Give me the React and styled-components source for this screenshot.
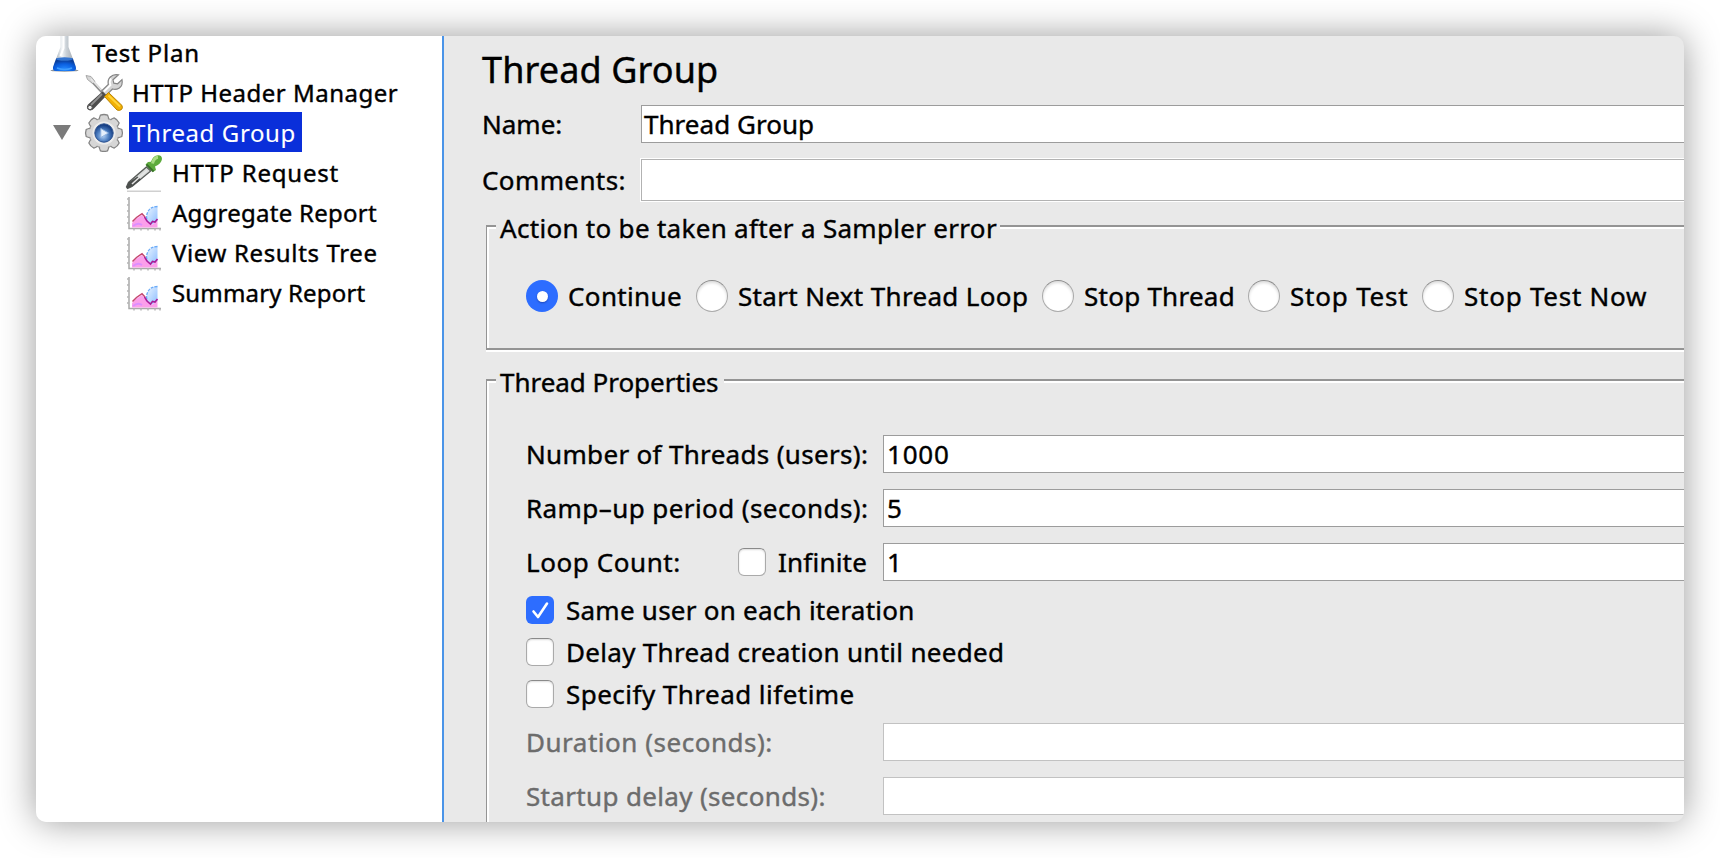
import React from 'react';
import styled, { createGlobalStyle, css } from 'styled-components';

const GlobalStyle = createGlobalStyle`
  * { box-sizing: border-box; }
  body {
    margin: 0;
    background: #fff;
    color: #000;
    font-family: 'Noto Sans', 'Open Sans', sans-serif;
    font-size: 26px;
    overflow: hidden;
  }
`;

const Stage = styled.div`
  height: 858px;
  padding: 36px;
`;

const Window = styled.div`
  display: flex;
  width: 1648px;
  height: 786px;
  border-radius: 10px;
  overflow: hidden;
  background: #e9e9e9;
  box-shadow: 0 0 36px rgba(0, 0, 0, 0.4);
`;

const Text = styled.span`
  white-space: pre;
  letter-spacing: ${(p) => p.$track || 0}px;
  -webkit-text-stroke: 0.4px currentColor;
`;

/* ---------- tree ---------- */

const Sidebar = styled.nav`
  flex: none;
  width: 408px;
  border-right: 2px solid #4a94e8;
  background: #fff;
  overflow: hidden;
`;

const Tree = styled.div`
  margin-top: -4px;
`;

const TreeRow = styled.div`
  display: flex;
  align-items: center;
  height: 40px;
  padding-left: ${(p) => 9 + p.$level * 40}px;
  font-size: 24px;
`;

const Twisty = styled.span`
  width: 0;
  height: 0;
  margin: 0 14px 0 -32px;
  border: 9px solid transparent;
  border-top: 15px solid #7b7b7b;
  border-bottom: 0;
`;

const TreeIcon = styled.svg`
  flex: none;
  width: 40px;
  height: 40px;
  margin: 0 1px 0 -1px;
`;

const TreeLabel = styled(Text)`
  margin-left: 4px;
  padding: 1px 6px 0 3px;
  height: 40px;
  line-height: 40px;
  ${(p) =>
    p.$selected &&
    css`
      background: #0a2fda;
      color: #fff;
      -webkit-text-stroke-width: 0.1px;
    `}
`;

const FlaskIcon = () => (
  <TreeIcon viewBox="0 0 40 40">
    <defs>
      <linearGradient id="glass">
        <stop offset="0" stopColor="#aab4bd" />
        <stop offset=".35" stopColor="#f3f6f8" />
        <stop offset=".62" stopColor="#c9d0d6" />
        <stop offset="1" stopColor="#a8b0b8" />
      </linearGradient>
      <radialGradient id="liquid" cx=".5" cy=".85" r=".7">
        <stop offset="0" stopColor="#2389ff" />
        <stop offset=".6" stopColor="#0b5fe0" />
        <stop offset="1" stopColor="#0b3f9c" />
      </radialGradient>
    </defs>
    <ellipse cx="20.500" cy="38.400" rx="14" ry="1.300" fill="#8d949c" />
    <path d="M16.500 3h8v12l4.500 12H12l4.500-12z" fill="url(#glass)" />
    <path d="M19.500 3v13l-3 8" stroke="#fff" strokeWidth="2" fill="none" />
    <path d="M12.100 26.500h16.800l3 8.500q.8 4-3 4H12q-3.600 0-3-4z" fill="url(#liquid)" />
    <ellipse cx="20.500" cy="27" rx="8.300" ry="1.700" fill="#3575d0" />
    <path d="M13 36q7.500 3 15 0" stroke="#3f9dff" strokeWidth="1.500" fill="none" />
  </TreeIcon>
);

const ToolsIcon = () => (
  <TreeIcon viewBox="0 0 40 40">
    <path d="M5 6l15 16" stroke="#8e8e8e" strokeWidth="3" />
    <path d="M2 3.500l5 1 4 5-2.500 2-5-4z" fill="#d6d6d6" stroke="#999" strokeWidth=".8" />
    <path d="M7 7l13 14" stroke="#e8e8e8" strokeWidth="1.200" />
    <path
      d="M34.500 2.800l-5.500 5 .8 3.400 3.800.6 4.400-4.200q1.200 6-3 8.600-3 1.800-6.500.8L22 23.500 17.500 19l6.800-6.500q-1-4.500 2-7.500 3.200-3.300 8.200-2.200z"
      fill="#d4d4d4"
      stroke="#858585"
      strokeWidth="1.200"
    />
    <path d="M27 6.500q-2 3-.5 6.500L20 19.500" stroke="#fff" strokeWidth="1.800" fill="none" />
    <path d="M18.500 19.500l4 4L10.500 36Q8 39.500 4.500 38q-3-2.500-.5-5.500z" fill="#4d4d4d" />
    <path d="M18 22L7 33" stroke="#929292" strokeWidth="1.800" />
    <circle cx="6" cy="35.500" r="2.200" fill="#eee" stroke="#555" />
    <path d="M20.500 24.500l4-4L38 33.500q1 2.500-.5 4-2 1.500-4.500.5z" fill="#f2b105" stroke="#b98200" strokeWidth="1" />
    <path d="M24.500 23.500L36 34.500" stroke="#ffd43c" strokeWidth="1.800" />
  </TreeIcon>
);

const TEETH = [0, 45, 90, 135, 180, 225, 270, 315];

const GearIcon = () => (
  <TreeIcon viewBox="0 0 40 40">
    <defs>
      <radialGradient id="hub" cx=".45" cy=".65" r=".6">
        <stop offset="0" stopColor="#b4d3f6" />
        <stop offset=".55" stopColor="#4779bd" />
        <stop offset="1" stopColor="#123a80" />
      </radialGradient>
    </defs>
    <g fill="#d6d6d6" stroke="#858585" strokeWidth="1.300">
      {TEETH.map((a) => (
        <path key={a} transform={`rotate(${a} 20 21)`} d="M14.800 8l1.600-4.800q3.600-1.400 7.200 0L25.200 8z" />
      ))}
    </g>
    <circle cx="20" cy="21" r="14.800" fill="#d6d6d6" stroke="#8f8f8f" strokeWidth=".9" />
    <g fill="#d6d6d6">
      {TEETH.map((a) => (
        <path key={a} transform={`rotate(${a} 20 21)`} d="M15.500 9l1.500-5h6l1.500 5z" />
      ))}
    </g>
    <circle cx="20" cy="21" r="11.500" fill="#ececec" />
    <circle cx="20" cy="21" r="9.200" fill="url(#hub)" stroke="#2e5390" strokeWidth="1" />
    <path d="M16.800 16.500l7.600 4.500-7.600 4.500z" fill="#e6f0fc" stroke="#8fb2e0" strokeWidth=".9" />
  </TreeIcon>
);

const DropperIcon = () => (
  <TreeIcon viewBox="0 0 40 40">
    <path d="M3 39.200h34" stroke="#d0d0d0" strokeWidth="1.500" />
    <path d="M22.500 15l4.200 4L8 34.500l-4.500 2-1-1.500 2-4.500z" fill="#d9dcda" stroke="#5a5d5b" strokeWidth="1.300" />
    <path d="M13.500 24.500l3.500 3L8 34.500l-4.500 2-1-1.500 2-4.500z" fill="#4b4e4c" />
    <path d="M23 18.500L8 32" stroke="#e6e6e6" strokeWidth="1.600" />
    <path d="M21.500 12.500l7.500 7.500 3-2-1-3.500q6.500-3 7-7.500Q38 3 34 3.200 29 3.500 27 9.800l-3 .3z" fill="#5dab3c" />
    <path d="M28.500 11.500q1.500-6 5.500-6.300" stroke="#a9dc84" strokeWidth="3" fill="none" />
    <path d="M22.500 12.500l7 7" stroke="#39702a" strokeWidth="2" />
  </TreeIcon>
);

const ChartIcon = () => (
  <TreeIcon viewBox="0 0 40 40">
    <defs>
      <linearGradient id="sky" x1="0" y1="0" x2="1" y2="1">
        <stop offset="0" stopColor="#eaf5ff" />
        <stop offset="1" stopColor="#8cbdff" />
      </linearGradient>
    </defs>
    <path d="M5 5v31.500h32" stroke="#a9a9a9" strokeWidth="1.500" fill="none" />
    <path d="M3 7h2M3 13h2M3 19h2M3 25h2M3 31h2M10 36.500v2M17 36.500v2M24 36.500v2M31 36.500v2M36 36.500v2" stroke="#b5b5b5" strokeWidth="1.500" />
    <path d="M33.500 14.500q-8 0-10 6.500-2 5 0 8.500l4 3.500 6-4z" fill="url(#sky)" />
    <path d="M33.500 14.500q-7 0-9.500 5-2.500 5-.5 9" stroke="#6aabf8" strokeWidth="1.300" fill="none" strokeDasharray="3 1" />
    <path d="M8 31l4-4 6-4 3 4 5 5 2.500.5 5-4v7H8z" fill="#fb9fea" />
    <path d="M9 34q5-4 9-1" stroke="#dc8fff" strokeWidth="2" fill="none" />
    <path d="M8.500 29.500l4-4 5.500-3.800 3 3.300" stroke="#c5456f" strokeWidth="1.500" fill="none" />
    <path d="M20.500 25l2.500 4 3.500 3 2-2.500 2.500.5 2.500-3" stroke="#aa1a98" strokeWidth="1.600" fill="none" />
  </TreeIcon>
);

const TREE = [
  { label: 'Test Plan', level: 0, Icon: FlaskIcon, track: 0.8 },
  { label: 'HTTP Header Manager', level: 1, Icon: ToolsIcon, track: 0.5 },
  { label: 'Thread Group', level: 1, Icon: GearIcon, track: 0.6, selected: true },
  { label: 'HTTP Request', level: 2, Icon: DropperIcon, track: 0.79 },
  { label: 'Aggregate Report', level: 2, Icon: ChartIcon, track: 0.25 },
  { label: 'View Results Tree', level: 2, Icon: ChartIcon, track: 0.64 },
  { label: 'Summary Report', level: 2, Icon: ChartIcon, track: 0.16 },
];

/* ---------- editor ---------- */

const Editor = styled.main`
  flex: 1;
  min-width: 0;
  padding-left: 38px;
`;

const Title = styled.h1`
  margin: 0;
  padding-top: 2px;
  height: 69px;
  line-height: 64px;
  font-size: 36px;
  font-weight: 400;
`;

const Field = styled.div`
  display: flex;
  align-items: center;
  flex: 1;
  height: 38px;
  padding-left: ${(p) => p.$inset || 3}px;
  border: 1px solid ${(p) => (p.$dim ? '#c2c2c2' : '#9c9c9c')};
  border-right: 0;
  background: #fff;
`;

const HeadRow = styled.label`
  display: flex;
  align-items: center;
  margin-bottom: ${(p) => p.$gap}px;
`;

const HeadLabel = styled.span`
  flex: none;
  width: 159px;
`;

const CommentField = styled(Field)`
  height: 42px;
  margin: 1px 0;
  border-color: #b2b2b2;
  box-shadow: 0 0 0 1px #fff;
`;

const Group = styled.section`
  height: ${(p) => p.$height}px;
  margin: 0 0 ${(p) => p.$gap || 0}px 4px;
  display: flex;
  flex-direction: column;
`;

const GroupHead = styled.header`
  display: flex;
  align-items: center;
  height: 32px;
`;

const Stub = styled.span`
  width: 10px;
  height: 19px;
  align-self: flex-end;
  border: solid #949494;
  border-width: 2px 0 0 1px;
  box-shadow: inset 2px 2px 0 #fff;
`;

const Rule = styled.span`
  flex: 1;
  height: 4px;
  margin-bottom: 2px;
  border-top: 2px solid #949494;
  background: #fff;
`;

const GroupTitle = styled(Text)`
  width: ${(p) => p.$width}px;
  padding-left: 4px;
`;

const GroupBody = styled.div`
  flex: 1;
  border: solid #949494;
  border-width: 0 0 2px 1px;
  box-shadow: inset 2px 0 0 #fff, 0 2px 0 #fff;
  padding-left: 39px;
`;

const RadioRow = styled.div`
  display: flex;
  align-items: center;
  height: 104px;
`;

const RadioItem = styled.label`
  display: flex;
  align-items: center;
  flex: none;
  width: ${(p) => p.$width}px;
  gap: 10px;
`;

const Radio = styled.span`
  display: grid;
  place-items: center;
  width: 32px;
  height: 32px;
  border-radius: 50%;
  border: 1px solid #aaa;
  border-top-color: #8a8a8a;
  background: #fff;
  box-shadow: inset 0 2px 3px rgba(0, 0, 0, 0.14);
  ${(p) =>
    p.$checked &&
    css`
      border: 0;
      background: #2d6dff;
      box-shadow: none;
      &::after {
        content: '';
        width: 11px;
        height: 11px;
        border-radius: 50%;
        background: #fff;
        box-shadow: 0 1px 2px rgba(0, 0, 60, 0.35);
      }
    `}
`;

const Check = styled.span`
  display: block;
  flex: none;
  width: 28px;
  height: 28px;
  border-radius: 6px;
  border: 1px solid #aaa;
  border-top-color: #8a8a8a;
  background: #fff;
  box-shadow: inset 0 1px 2px rgba(0, 0, 0, 0.14);
  ${(p) =>
    p.$checked &&
    css`
      border: 0;
      background: #2d6dff;
      box-shadow: none;
    `}
`;

const PropRows = styled.div`
  display: flex;
  flex-direction: column;
  gap: 16px;
  padding-top: ${(p) => p.$top}px;
`;

const PropRow = styled.label`
  display: flex;
  align-items: center;
  height: 38px;
  color: ${(p) => (p.$dim ? '#6c6c6c' : '#000')};
`;

const PropLabel = styled.span`
  display: flex;
  align-items: center;
  justify-content: space-between;
  flex: none;
  width: 357px;
  padding-right: 16px;
`;

const Option = styled.label`
  display: flex;
  align-items: center;
  gap: 12px;
  height: 42px;
`;

const Options = styled.div`
  padding-top: 8px;
`;

const CheckMark = () => (
  <svg width="28" height="28" viewBox="0 0 28 28" fill="none" stroke="#fff" strokeWidth="2.600" strokeLinecap="round" strokeLinejoin="round">
    <path d="M7.500 15.500l4.500 5.500 9-13.500" />
  </svg>
);

const RADIOS = [
  { label: 'Continue', width: 170, track: 0.36 },
  { label: 'Start Next Thread Loop', width: 346, track: 0.34 },
  { label: 'Stop Thread', width: 206, track: 0.25 },
  { label: 'Stop Test', width: 174, track: 0.8 },
  { label: 'Stop Test Now', width: 240, track: 0.75 },
];

const OPTIONS = [
  { label: 'Same user on each iteration', track: 0.25, checked: true },
  { label: 'Delay Thread creation until needed', track: 0.3 },
  { label: 'Specify Thread lifetime', track: 0.47 },
];

export default function App() {
  return (
    <>
      <GlobalStyle />
      <Stage>
        <Window>
          <Sidebar>
            <Tree>
              {TREE.map(({ label, level, Icon, track, selected }) => (
                <TreeRow key={label} $level={level}>
                  {selected && <Twisty />}
                  <Icon />
                  <TreeLabel $track={track} $selected={selected}>{label}</TreeLabel>
                </TreeRow>
              ))}
            </Tree>
          </Sidebar>
          <Editor>
            <Title><Text $track={0.11}>Thread Group</Text></Title>
            <HeadRow $gap={15}>
              <HeadLabel><Text>Name:</Text></HeadLabel>
              <Field $inset={2}><Text $track={0.03}>Thread Group</Text></Field>
            </HeadRow>
            <HeadRow $gap={10}>
              <HeadLabel><Text $track={0.39}>Comments:</Text></HeadLabel>
              <CommentField />
            </HeadRow>

            <Group $height={137} $gap={17}>
              <GroupHead>
                <Stub />
                <GroupTitle $width={504} $track={0.3}>Action to be taken after a Sampler error</GroupTitle>
                <Rule />
              </GroupHead>
              <GroupBody>
                <RadioRow>
                  {RADIOS.map(({ label, width, track }, i) => (
                    <RadioItem key={label} $width={width}>
                      <Radio $checked={i === 0} />
                      <Text $track={track}>{label}</Text>
                    </RadioItem>
                  ))}
                </RadioRow>
              </GroupBody>
            </Group>

            <Group $height={480}>
              <GroupHead>
                <Stub />
                <GroupTitle $width={228} $track={-0.03}>Thread Properties</GroupTitle>
                <Rule />
              </GroupHead>
              <GroupBody>
                <PropRows $top={37}>
                  <PropRow>
                    <PropLabel><Text $track={0.32}>Number of Threads (users):</Text></PropLabel>
                    <Field><Text $track={0.8}>1000</Text></Field>
                  </PropRow>
                  <PropRow>
                    <PropLabel><Text $track={0.42}>Ramp–up period (seconds):</Text></PropLabel>
                    <Field><Text>5</Text></Field>
                  </PropRow>
                  <PropRow>
                    <PropLabel>
                      <Text $track={0.58}>Loop Count:</Text>
                      <Option as="span">
                        <Check />
                        <Text $track={0.19}>Infinite</Text>
                      </Option>
                    </PropLabel>
                    <Field><Text>1</Text></Field>
                  </PropRow>
                </PropRows>
                <Options>
                  {OPTIONS.map(({ label, track, checked }) => (
                    <Option key={label}>
                      <Check $checked={checked}>{checked && <CheckMark />}</Check>
                      <Text $track={track}>{label}</Text>
                    </Option>
                  ))}
                </Options>
                <PropRows $top={8}>
                  <PropRow $dim>
                    <PropLabel><Text $track={0.52}>Duration (seconds):</Text></PropLabel>
                    <Field $dim />
                  </PropRow>
                  <PropRow $dim>
                    <PropLabel><Text $track={0.34}>Startup delay (seconds):</Text></PropLabel>
                    <Field $dim />
                  </PropRow>
                </PropRows>
              </GroupBody>
            </Group>
          </Editor>
        </Window>
      </Stage>
    </>
  );
}
